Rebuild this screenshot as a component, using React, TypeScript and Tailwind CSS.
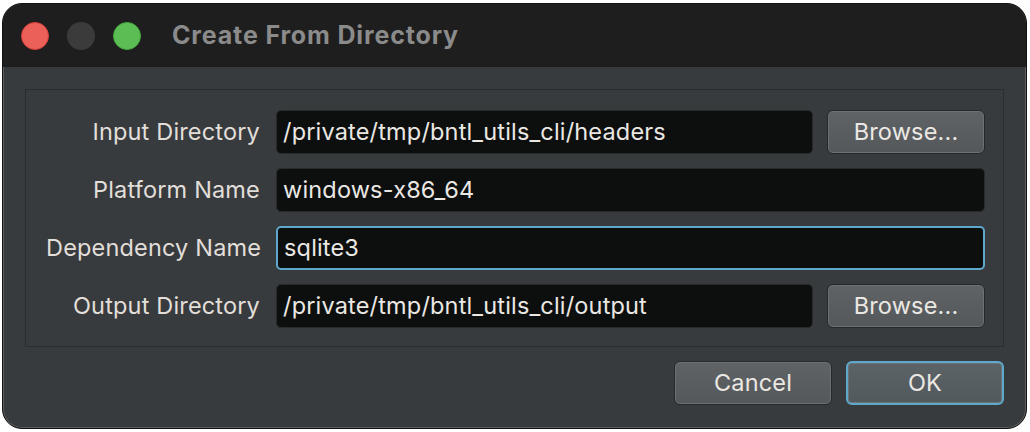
import React from 'react';

const font = { fontFamily: 'Inter, "Noto Sans", sans-serif' };

const Field: React.FC<{ value: string; focused?: boolean }> = ({ value, focused }) => (
  <div
    className={`flex-1 h-[44px] flex items-center pl-[6px] rounded-[5px] bg-[#0d0f0f] border text-[23.5px] tracking-[0.17px] text-[#ebe8e4] whitespace-nowrap ${
      focused ? 'border-[#5ea9cb] border-2 pl-[5px]' : 'border-[#282b2c]'
    }`}
  >
    {value}
  </div>
);

const Button: React.FC<{ label: string; primary?: boolean }> = ({ label, primary }) => (
  <div
    className={`w-[158px] h-[44px] flex items-center justify-center rounded-[6px] text-[23.5px] tracking-[0.17px] text-[#ebe8e4] bg-gradient-to-b ${
      primary
        ? 'from-[#5c6367] to-[#52595d] border-2 border-[#5ea9cb] shadow-[inset_0_0_0_1px_#6c7377]'
        : 'from-[#606366] to-[#55585b] border border-[#26292a] shadow-[inset_0_0_0_1px_#6e7174]'
    }`}
  >
    {label}
  </div>
);

const rows = [
  { label: 'Input Directory', value: '/private/tmp/bntl_utils_cli/headers', browse: true },
  { label: 'Platform Name', value: 'windows-x86_64' },
  { label: 'Dependency Name', value: 'sqlite3', focused: true },
  { label: 'Output Directory', value: '/private/tmp/bntl_utils_cli/output', browse: true },
];

export default function App() {
  return (
    <div className="w-[1030px] h-[432px] bg-white pl-[2px] pt-[3px]" style={font}>
      <div className="w-[1025px] h-[426px] rounded-[20px] overflow-hidden border border-[#111] shadow-[inset_0_0_0_1px_#5e5e5e] flex flex-col bg-[#383b3d]">
        {/* title bar */}
        <div className="h-[63px] bg-[#1e1e1e] flex items-center pl-[18px] shrink-0">
          <div className="flex gap-[18px]">
            <div className="w-[28px] h-[28px] rounded-full bg-[#ec605a] border border-[#d8403a]" />
            <div className="w-[28px] h-[28px] rounded-full bg-[#3b3b3b]" />
            <div className="w-[28px] h-[28px] rounded-full bg-[#5dbd55] border border-[#45a83e]" />
          </div>
          <div className="ml-[31px] text-[25px] font-bold text-[#8b8b8b] tracking-[0.85px] whitespace-nowrap">Create From Directory</div>
        </div>

        {/* body */}
        <div className="flex-1 flex flex-col px-[22px] pt-[22px] pb-[22px]">
          <div className="border border-[#2b2e30] flex flex-col gap-[14px] pl-[20px] pr-[18px] pt-[20px] pb-[18px]">
            {rows.map(r => (
              <div key={r.label} className="flex items-center">
                <div className="w-[214px] text-right text-[23.5px] tracking-[0.17px] text-[#e2dfda] shrink-0 whitespace-nowrap">{r.label}</div>
                <div className="flex-1 flex items-center gap-[14px] ml-[16px]">
                  <Field value={r.value} focused={r.focused} />
                  {r.browse && <Button label="Browse..." />}
                </div>
              </div>
            ))}
          </div>
          <div className="flex justify-end gap-[14px] mt-[14px]">
            <Button label="Cancel" />
            <Button label="OK" primary />
          </div>
        </div>
      </div>
    </div>
  );
}
